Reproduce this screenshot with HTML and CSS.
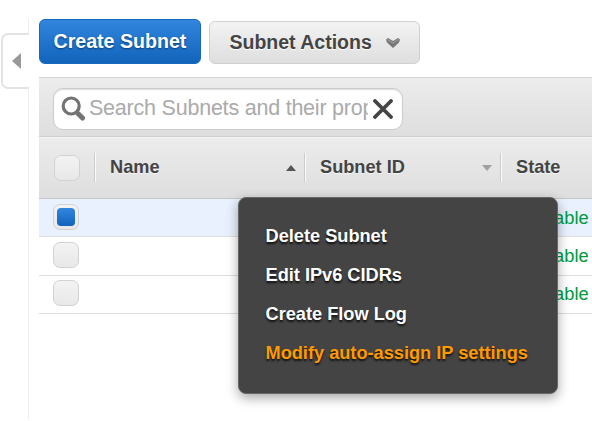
FILE: index.html
```html
<!DOCTYPE html>
<html lang="en">
<head>
<meta charset="utf-8">
<title>Subnets</title>
<link rel="stylesheet" href="styles.css">
</head>
<body>
<div class="app">
  <aside class="rail">
    <button class="collapse" aria-label="Collapse">
      <svg width="9" height="16" viewBox="0 0 9 16"><path d="M9 0V16L0 8Z" fill="#999"/></svg>
    </button>
  </aside>
  <main class="main">
    <div class="actions">
      <button class="btn primary">Create Subnet</button>
      <div class="dropdown">
        <button class="btn secondary">Subnet Actions
          <svg width="14" height="10" viewBox="0 0 14 10"><path d="M0 1.500 2 0 7 3 12 0 14 1.500 13 4.500 7 10 1 4.500Z" fill="#777"/><path d="M1.500 1.500 7 5 12.500 1.500" fill="none" stroke="#999" stroke-width="1.200"/></svg>
        </button>
        <ul class="menu">
          <li>Delete Subnet</li>
          <li>Edit IPv6 CIDRs</li>
          <li>Create Flow Log</li>
          <li class="active">Modify auto-assign IP settings</li>
        </ul>
      </div>
    </div>
    <div class="toolbar">
      <div class="search">
        <svg class="lens" width="25" height="26" viewBox="0 0 25 26" fill="none" stroke="#737373"><circle cx="10.200" cy="10" r="8" stroke-width="3.200"/><path d="M15.500 16 18 18.500" stroke-width="3"/><path d="M17.500 18 21.500 22" stroke-width="5" stroke-linecap="round"/></svg>
        <span class="query">Search Subnets and their prop</span>
        <svg class="clear" width="20" height="20" viewBox="0 0 20 20" fill="none" stroke="#444" stroke-width="3.800" stroke-linecap="round"><path d="M2 2 18 18M18 2 2 18"/></svg>
      </div>
    </div>
    <div class="row head">
      <div class="pick"><i class="check"></i></div>
      <div class="cell name">Name<svg width="10" height="6" viewBox="0 0 10 6"><path d="M5 0 10 6H0Z" fill="#555"/></svg></div>
      <div class="cell id">Subnet ID<svg width="10" height="6" viewBox="0 0 10 6"><path d="M0 0H10L5 6Z" fill="#a0a0a0"/></svg></div>
      <div class="cell state">State</div>
    </div>
    <div class="row selected"><div class="pick"><i class="check on"></i></div><div class="value">available</div></div>
    <div class="row"><div class="pick"><i class="check"></i></div><div class="value">available</div></div>
    <div class="row"><div class="pick"><i class="check"></i></div><div class="value">available</div></div>
  </main>
</div>
</body>
</html>
```
FILE: styles.css
```css
* { box-sizing: border-box; }
body {
  margin: 0;
  background: #fff;
  color: #444;
  font-family: "Liberation Sans", Arial, sans-serif;
  overflow: hidden;
}
button { font: inherit; }
.app { display: flex; height: 421px; padding-top: 19px; }
.rail {
  width: 29px;
  height: 401px;
  flex: none;
  padding: 14px 0 0 1px;
  border-right: 1px solid #eee;
}
.collapse {
  display: flex;
  align-items: center;
  width: 28px;
  height: 56px;
  padding: 0 0 0 9px;
  border: 2px solid #e3e3e3;
  border-right: 0;
  border-radius: 7px 0 0 7px;
  background: #fff;
}
.main { flex: 1; min-width: 0; margin-left: 10px; }
.actions { display: flex; align-items: flex-end; gap: 8px; height: 45px; margin-bottom: 13px; }
.btn {
  display: flex;
  align-items: center;
  font-weight: bold;
  font-size: 19.5px;
  border-radius: 6px;
  white-space: nowrap;
}
.primary {
  width: 162px;
  height: 45px;
  padding: 0 0 1px 13.5px;
  font-size: 19.6px;
  color: #fff;
  border: 1px solid #1768bd;
  background: linear-gradient(#3286dd, #1264bb);
  text-shadow: 0 1px 2px #093b75;
}
.dropdown { position: relative; }
.secondary {
  width: 211px;
  height: 43px;
  padding: 0 0 0 19.5px;
  gap: 14px;
  color: #444;
  border: 1px solid #d0d0d0;
  background: linear-gradient(#f3f3f3, #dedede);
  text-shadow: 0 1px 1px #fff;
}
.menu {
  position: absolute;
  z-index: 2;
  top: 176px;
  left: 29px;
  width: 320px;
  height: 197px;
  margin: 0;
  padding: 18.5px 0 0 26.5px;
  list-style: none;
  color: #fff;
  background: #444;
  border: 1px solid #666;
  border-radius: 8px;
  box-shadow: 0 4px 12px rgba(0, 0, 0, .35);
  font-weight: bold;
  font-size: 18.2px;
  line-height: 39.2px;
  text-shadow: 0 2px 2px #111;
  white-space: nowrap;
}
.active { color: #f90; }
.toolbar {
  height: 59px;
  padding: 10px 0 0 14px;
  border-top: 1px solid #d6d6d6;
  background: linear-gradient(#ececec, #dedede);
}
.search {
  display: flex;
  align-items: center;
  width: 350px;
  height: 42px;
  padding-left: 7px;
  border: 1px solid #ccc;
  border-radius: 10px;
  background: #fff;
  box-shadow: inset 0 1px 1px #ddd;
}
.lens { flex: none; }
.query {
  width: 279px;
  margin: 0 5px 3px 3px;
  overflow: hidden;
  font-size: 21.5px;
  letter-spacing: -.22px;
  line-height: 28px;
  color: #aaa;
  white-space: nowrap;
}
.clear { flex: none; }
.row {
  display: flex;
  align-items: center;
  height: 38.3px;
  border-bottom: 1px solid #ddd;
}
.head {
  height: 63px;
  border-top: 1px solid #cfcfcf;
  border-bottom-color: #c6c6c6;
  background: linear-gradient(#ececec, #dedede);
  box-shadow: inset 0 1px #f4f4f4;
}
.selected { background: #e9f1fe; }
.pick { flex: none; width: 55px; padding: 0 0 2px 14px; }
.head .pick { padding: 0 0 0 15px; }
.check {
  display: block;
  width: 26px;
  height: 26px;
  border: 1.5px solid #d2d2d2;
  border-radius: 7px;
  background: linear-gradient(#f3f3f3, #e8e8e8);
}
.on::after {
  content: "";
  display: block;
  width: 18px;
  height: 18px;
  margin: 3px;
  border-radius: 4px;
  background: linear-gradient(#3286dd, #1264bb);
}
.cell {
  display: flex;
  align-items: center;
  flex: none;
  height: 29px;
  padding-left: 14px;
  border-left: 1px solid #ccc;
  box-shadow: inset 1px 0 #fafafa;
  font-weight: bold;
  font-size: 18.2px;
  text-shadow: 0 1px #f5f5f5;
}
.cell svg { margin-left: auto; }
.name { width: 210px; padding-right: 8px; padding-left: 15px; }
.id { width: 196px; padding-left: 15px; padding-right: 8px; }
.state { padding-left: 15px; }
.value { margin-left: 422.5px; color: #009a3d; font-size: 18.3px; line-height: 24px; }
```
